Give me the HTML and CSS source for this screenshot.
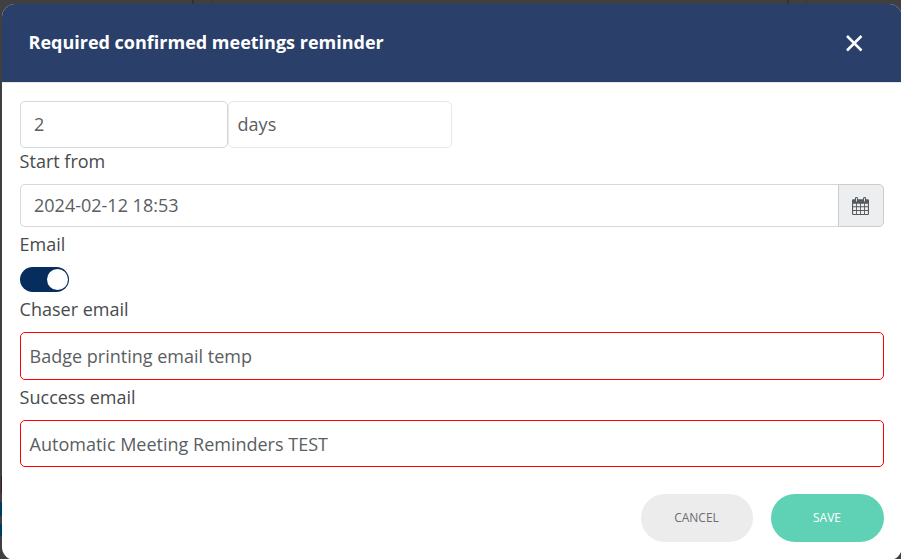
FILE: index.html
```html
<!DOCTYPE html>
<html lang="en">
<head>
<meta charset="utf-8">
<title>Required confirmed meetings reminder</title>
<link rel="stylesheet" href="styles.css">
</head>
<body>
<div class="modal" role="dialog">
  <header class="modal-header">
    <h1>Required confirmed meetings reminder</h1>
    <button class="close" aria-label="Close"><svg width="18" height="18" viewBox="0 0 18 18"><path d="M2 2 16.500 16.500M16.500 2 2 16.500" fill="none" stroke="#fff" stroke-width="2.500"/></svg></button>
  </header>
  <main class="modal-body">
    <div class="interval">
      <div class="field amount">2</div>
      <div class="field unit">days</div>
    </div>
    <div class="label first">Start from</div>
    <div class="date">
      <div class="field date-value">2024-02-12 18:53</div>
      <button class="date-button" aria-label="Choose date"><svg width="17" height="18" viewBox="0 0 17 18"><path fill="#555a5e" fill-rule="evenodd" d="M1.2 2.3H3V1.2Q3 0 4 0H4.800Q5.900 0 5.900 1.200V2.300H11.100V1.200Q11.100 0 12.200 0H13Q14 0 14 1.200V2.300H15.800Q17 2.300 17 3.500V16.800Q17 18 15.800 18H1.200Q0 18 0 16.800V3.500Q0 2.300 1.200 2.300ZM4 1V4.500H4.900V1ZM12.100 1V4.500H13V1ZM1.100 6.800V9.300H4V6.800ZM4.900 6.800V9.300H8.100V6.800ZM9 6.800V9.300H12.100V6.800ZM13 6.800V9.300H15.900V6.800ZM1.100 10.200V13.100H4V10.200ZM4.900 10.200V13.100H8.100V10.200ZM9 10.200V13.100H12.100V10.200ZM13 10.200V13.100H15.900V10.200ZM1.100 14V16.900H4V14ZM4.900 14V16.900H8.100V14ZM9 14V16.900H12.100V14ZM13 14V16.900H15.900V14Z"/></svg></button>
    </div>
    <div class="label">Email</div>
    <div class="toggle" role="switch" aria-checked="true"><span class="knob"></span></div>
    <div class="label">Chaser email</div>
    <div class="field invalid chaser">Badge printing email temp</div>
    <div class="label">Success email</div>
    <div class="field invalid">Automatic Meeting Reminders TEST</div>
  </main>
  <footer class="modal-footer">
    <button class="button cancel">CANCEL</button>
    <button class="button save">SAVE</button>
  </footer>
</div>
</body>
</html>
```

FILE: styles.css
```css
* { box-sizing: border-box; }
body {
  margin: 0;
  height: 559px;
  padding: 4px 0 0 2px;
  overflow: hidden;
  background:
    linear-gradient(#3a1d1d, #3a1d1d) 1px 476px / 1px 17px no-repeat,
    linear-gradient(#003c60, #003c60) 0 502px / 2px 14px no-repeat,
    linear-gradient(#003c60, #003c60) 0 524px / 2px 12px no-repeat,
    linear-gradient(#333, #333) 192px 0 / 2px 4px no-repeat,
    linear-gradient(#383838, #383838) 211px 0 / 1px 4px no-repeat,
    linear-gradient(#333, #333) 787px 0 / 2px 4px no-repeat,
    linear-gradient(#383838, #383838) 806px 0 / 1px 4px no-repeat,
    #404040;
  font-family: "Open Sans", sans-serif;
  font-size: 18px;
  color: #5a5e62;
}
button { border: 0; padding: 0; margin: 0; font-family: inherit; }
.modal {
  width: 900px;
  height: 556px;
  overflow: hidden;
  border-radius: 13px;
  background: #fff;
}
.modal-header {
  display: flex;
  align-items: center;
  justify-content: space-between;
  height: 79px;
  padding: 0 39px 0 26.5px;
  background: #2a406b;
  border-bottom: 1px solid #e5e5e5;
}
.modal-header h1 {
  margin: 0 0 2px;
  color: #fff;
  font-size: 18px;
  line-height: 26px;
  font-weight: 700;
}
.close { display: flex; background: none; }
.modal-body { padding: 18px 18px 0; }
.interval { display: flex; }
.field {
  display: flex;
  align-items: center;
  height: 47px;
  padding: 0 8.6px;
  border: 1px solid #d5d7d8;
  border-radius: 5px;
  line-height: 26px;
}
.amount { width: 208px; padding: 0 13px 2px; }
.unit { width: 224px; padding-bottom: 2px; border-color: #e8e8e8; }
.label {
  margin: 4px 0 10px -0.4px;
  line-height: 26px;
  color: #464a4c;
}
.label.first { margin-top: 0; }
.date { display: flex; }
.date-value {
  flex: 1;
  height: 43px;
  padding: 0 0 2px 13px;
  border-right: 0;
  border-radius: 5px 0 0 5px;
}
.date-button {
  display: flex;
  align-items: center;
  justify-content: center;
  width: 46px;
  height: 43px;
  padding-right: 2px;
  border: 1px solid #ccc;
  border-radius: 0 5px 5px 0;
  background: #eceeef;
}
.toggle {
  display: flex;
  align-items: center;
  justify-content: flex-end;
  width: 49px;
  height: 25px;
  padding: 2px 1.5px;
  border-radius: 13px;
  background: #062d5e;
}
.knob { width: 21px; height: 21px; border-radius: 50%; background: #fff; }
.field.invalid { border-color: #f00; }
.chaser { height: 48px; }
.modal-footer {
  display: flex;
  justify-content: flex-end;
  gap: 18px;
  padding: 27px 18px 0;
}
.button {
  height: 48px;
  padding: 0 1px 2px 0;
  border-radius: 24px;
  font-size: 12px;
}
.cancel { width: 112px; background: #ececec; color: #6b6d70; }
.save { width: 113px; background: #5fd2b5; color: #fff; }
```
